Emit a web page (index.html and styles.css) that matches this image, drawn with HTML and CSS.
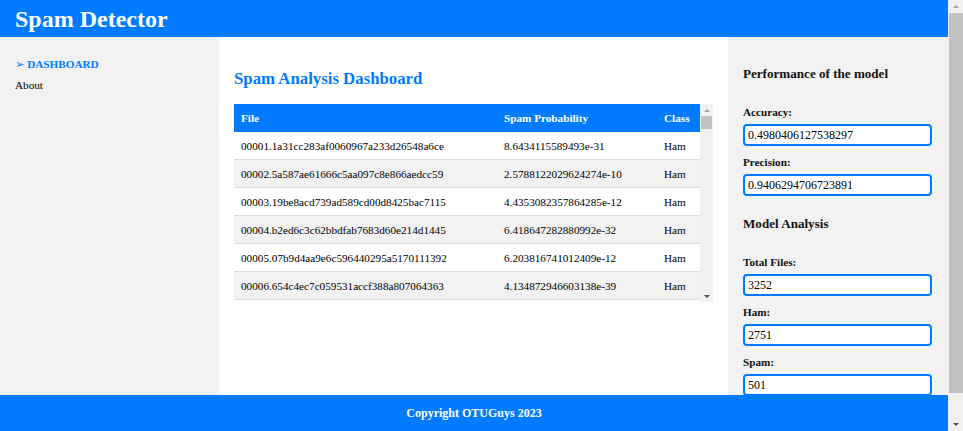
FILE: index.html
```html
<!DOCTYPE html>
<html lang="en">
<head>
<meta charset="utf-8">
<title>Spam Detector</title>
<link rel="stylesheet" href="styles.css">
</head>
<body>
<div class="app">
  <header class="topbar"><h1 class="brand">Spam Detector</h1></header>
  <div class="layout">
    <nav class="sidebar">
      <ul class="nav-list">
        <li><a class="nav-link active" href="#"><span class="nav-arrow">➢</span> DASHBOARD</a></li>
        <li><a class="nav-link" href="#">About</a></li>
      </ul>
    </nav>
    <main class="content">
      <h2 class="page-title">Spam Analysis Dashboard</h2>
      <div class="table-wrap">
        <div class="table-scroll">
          <table class="results">
            <colgroup><col class="col-file"><col class="col-prob"><col class="col-class"></colgroup>
            <thead>
              <tr><th>File</th><th>Spam Probability</th><th>Class</th></tr>
            </thead>
            <tbody id="rows">
              <tr><td>00001.1a31cc283af0060967a233d26548a6ce</td><td>8.6434115589493e-31</td><td>Ham</td></tr>
              <tr><td>00002.5a587ae61666c5aa097c8e866aedcc59</td><td>2.5788122029624274e-10</td><td>Ham</td></tr>
              <tr><td>00003.19be8acd739ad589cd00d8425bac7115</td><td>4.4353082357864285e-12</td><td>Ham</td></tr>
              <tr><td>00004.b2ed6c3c62bbdfab7683d60e214d1445</td><td>6.418647282880992e-32</td><td>Ham</td></tr>
              <tr><td>00005.07b9d4aa9e6c596440295a5170111392</td><td>6.203816741012409e-12</td><td>Ham</td></tr>
              <tr><td>00006.654c4ec7c059531accf388a807064363</td><td>4.134872946603138e-39</td><td>Ham</td></tr>
            </tbody>
          </table>
        </div>
        <div class="vbar vbar-table" aria-hidden="true">
          <span class="vbar-btn vbar-up"></span>
          <span class="vbar-track"><span class="vbar-thumb"></span></span>
          <span class="vbar-btn vbar-down"></span>
        </div>
      </div>
    </main>
    <aside class="stats">
      <section class="stats-section">
        <h3 class="stats-title">Performance of the model</h3>
        <div class="field"><label class="field-label" for="acc">Accuracy:</label><input class="field-input" id="acc" type="text" value="0.4980406127538297" readonly></div>
        <div class="field"><label class="field-label" for="prec">Precision:</label><input class="field-input" id="prec" type="text" value="0.9406294706723891" readonly></div>
      </section>
      <section class="stats-section">
        <h3 class="stats-title">Model Analysis</h3>
        <div class="field"><label class="field-label" for="total">Total Files:</label><input class="field-input" id="total" type="text" value="3252" readonly></div>
        <div class="field"><label class="field-label" for="ham">Ham:</label><input class="field-input" id="ham" type="text" value="2751" readonly></div>
        <div class="field"><label class="field-label" for="spam">Spam:</label><input class="field-input" id="spam" type="text" value="501" readonly></div>
      </section>
    </aside>
  </div>
</div>
<footer class="footer">Copyright OTUGuys 2023</footer>
<div class="vbar vbar-page" aria-hidden="true">
  <span class="vbar-btn vbar-up"></span>
  <span class="vbar-track"><span class="vbar-thumb"></span></span>
  <span class="vbar-btn vbar-down"></span>
</div>
<script src="script.js"></script>
</body>
</html>
```

FILE: styles.css
```css
html, body {
  margin: 0;
  padding: 0;
}

body {
  font-family: "Liberation Serif", "Times New Roman", "DejaVu Serif", serif;
  color: #000;
  background: #fff;
}

.app {
  margin-right: 15px;
}

.topbar {
  background: #007bff;
  height: 37px;
  padding: 2px 15px 0;
  box-sizing: border-box;
}

.brand {
  margin: 0;
  font-size: 24px;
  line-height: 35px;
  font-weight: bold;
  color: #fff;
}

.layout {
  display: grid;
  grid-template-columns: 219px 1fr 220px;
}

.sidebar {
  background: #f2f2f2;
  padding: 17px 15px;
}

.nav-list {
  list-style: none;
  margin: 0;
  padding: 0;
}

.nav-list li {
  font-size: 11.2px;
  line-height: 20px;
}

.nav-link {
  color: #000;
  text-decoration: none;
}

.nav-link.active {
  color: #007bff;
  font-weight: bold;
}

.nav-arrow {
  font-family: "DejaVu Sans", sans-serif;
  font-weight: normal;
}

.content {
  padding: 15px;
  min-width: 0;
}

.page-title {
  margin: 17px 0 15px;
  font-size: 16.8px;
  line-height: 20px;
  color: #007bff;
  font-weight: bold;
}

.table-wrap {
  display: flex;
  height: 198px;
}

.table-scroll {
  flex: 1;
  min-width: 0;
  overflow-y: auto;
  scrollbar-width: none;
}

.results {
  width: 100%;
  border-collapse: collapse;
  table-layout: fixed;
  font-size: 11.2px;
  line-height: 13px;
}

.col-file { width: 263px; }
.col-prob { width: 160px; }

.results th {
  position: sticky;
  top: 0;
  background: #007bff;
  color: #fff;
  text-align: left;
  font-weight: bold;
  padding: 8px 7px 7px;
  white-space: nowrap;
}

.results td {
  padding: 8px 7px 6px;
  border-bottom: 1px solid #dedede;
  white-space: nowrap;
  overflow: hidden;
}

.results tbody tr:nth-child(even) td {
  background: #f2f2f2;
}

.stats {
  background: #f2f2f2;
  padding: 18px 16px 18px 15px;
  display: flex;
  flex-direction: column;
}

.stats-title {
  margin: 11px 0 23px;
  font-size: 13.1px;
  line-height: 16px;
  font-weight: bold;
  color: #111;
}

.field {
  margin-bottom: 9px;
}

.field-label {
  display: block;
  font-size: 11.2px;
  line-height: 14px;
  font-weight: bold;
  color: #111;
  margin-bottom: 5px;
}

.field-input {
  display: block;
  width: 100%;
  height: 22px;
  box-sizing: border-box;
  border: 2px solid #007bff;
  border-radius: 4px;
  background: #fff;
  padding: 0 3px;
  font-family: inherit;
  font-size: 12px;
  color: #000;
  outline: none;
}

.footer {
  position: fixed;
  left: 0;
  right: 15px;
  bottom: 0;
  height: 36px;
  line-height: 36px;
  background: #007bff;
  color: #fff;
  text-align: center;
  font-size: 12px;
  font-weight: bold;
}

/* classic scrollbar look */
.vbar {
  display: flex;
  flex-direction: column;
  background: #f1f1f1;
}

.vbar-table {
  width: 13px;
  flex: none;
}

.vbar-page {
  position: fixed;
  top: 0;
  right: 0;
  bottom: 0;
  width: 15px;
}

.vbar-btn {
  flex: none;
  height: 13px;
  display: flex;
  align-items: center;
  justify-content: center;
}

.vbar-table .vbar-btn {
  height: 12px;
}

.vbar-btn::before {
  content: "";
  width: 0;
  height: 0;
  border-left: 3px solid transparent;
  border-right: 3px solid transparent;
}

.vbar-up::before {
  border-bottom: 3px solid #a3a3a3;
}

.vbar-down::before {
  border-top: 3px solid #505050;
}

.vbar-track {
  flex: 1;
  display: flex;
  flex-direction: column;
  padding: 0 1px;
}

.vbar-thumb {
  display: block;
  background: #c1c1c1;
}

.vbar-table .vbar-thumb {
  height: 13px;
}

.vbar-page .vbar-track {
  padding: 0 0 0 1px;
}

.vbar-page .vbar-thumb {
  height: 380px;
}
```

FILE: script.js
```js
(function () {
  var body = document.getElementById('rows');
  var seed = 20230417;
  function rnd() {
    seed = (seed * 1103515245 + 12345) % 2147483648;
    return seed / 2147483648;
  }
  var hex = '0123456789abcdef';
  for (var i = 7; i <= 10; i++) {
    var h = '';
    for (var j = 0; j < 32; j++) {
      h += hex.charAt(Math.floor(rnd() * 16));
    }
    var name = String(i).padStart(5, '0') + '.' + h;
    var prob = (1 + rnd() * 8).toFixed(15) + 'e-' + Math.floor(5 + rnd() * 40);
    var tr = document.createElement('tr');
    [name, prob, 'Ham'].forEach(function (text) {
      var td = document.createElement('td');
      td.textContent = text;
      tr.appendChild(td);
    });
    body.appendChild(tr);
  }
})();
```
